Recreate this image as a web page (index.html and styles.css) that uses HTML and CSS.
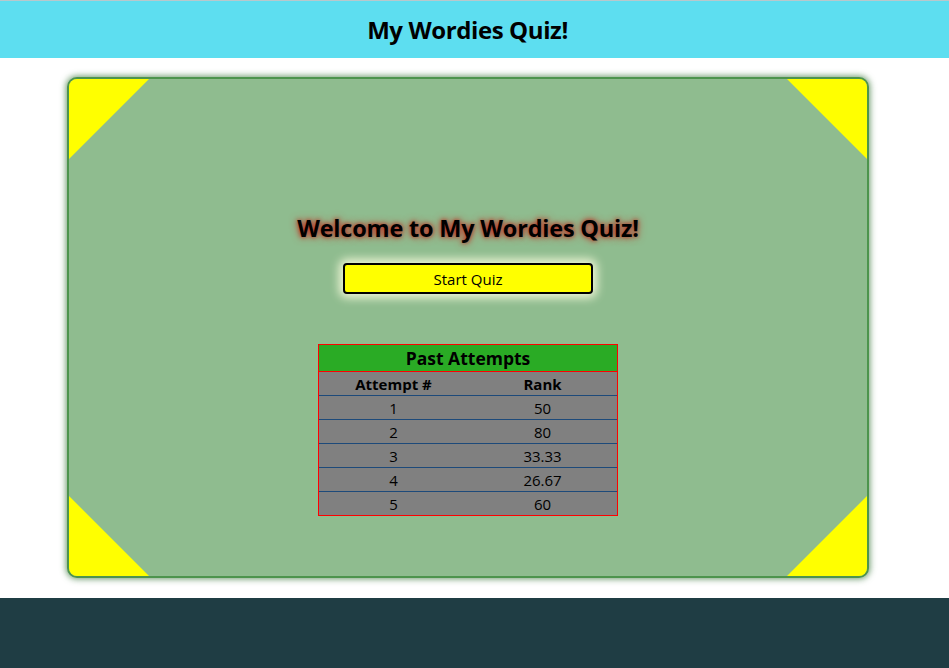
FILE: index.html
```html
<!DOCTYPE html>
<html>
<head>
<meta charset="utf-8">
<link rel="stylesheet" href="styles.css">
</head>
<body>
<header class="topbar"><h1 class="site-title">My Wordies Quiz!</h1></header>
<main class="page">
  <section class="card">
    <span class="corner tl"></span><span class="corner tr"></span>
    <span class="corner bl"></span><span class="corner br"></span>
    <h2 class="welcome">Welcome to My Wordies Quiz!</h2>
    <button class="start-btn">Start Quiz</button>
    <table class="attempts">
      <thead>
        <tr><th colspan="2" class="caption-cell">Past Attempts</th></tr>
        <tr><th>Attempt #</th><th>Rank</th></tr>
      </thead>
      <tbody>
        <tr><td>1</td><td>50</td></tr>
        <tr><td>2</td><td>80</td></tr>
        <tr><td>3</td><td>33.33</td></tr>
        <tr><td>4</td><td>26.67</td></tr>
        <tr><td>5</td><td>60</td></tr>
      </tbody>
    </table>
  </section>
</main>
<footer class="footer"></footer>
</body>
</html>
```

FILE: styles.css
```css
* { box-sizing: border-box; }
html, body { margin: 0; padding: 0; background: #fff; }
body { font-family: "Open Sans", "Noto Sans", sans-serif; color: #000; }

.topbar {
  height: 58px;
  background: #5ddef0;
  border-top: 1px solid #b8c8cc;
  display: flex;
  align-items: center;
  justify-content: center;
  padding-right: 14px;
}
.site-title {
  margin: 0;
  font-size: 24px;
  font-weight: 700;
  letter-spacing: -0.4px;
}

.page {
  padding: 19px 0 20px 67px;
}
.card {
  position: relative;
  width: 802px;
  height: 501px;
  background: #8fbc8f;
  border: 2px solid #4d944d;
  border-radius: 10px;
  box-shadow: 0 0 6px 1px rgba(60, 120, 60, 0.75);
  overflow: hidden;
  display: flex;
  flex-direction: column;
  align-items: center;
  padding-top: 133px;
}
.corner {
  position: absolute;
  width: 80px;
  height: 80px;
  background: #ffff00;
}
.corner.tl { top: 0; left: 0; clip-path: polygon(0 0, 100% 0, 0 100%); }
.corner.tr { top: 0; right: 0; clip-path: polygon(0 0, 100% 0, 100% 100%); }
.corner.bl { bottom: 0; left: 0; clip-path: polygon(0 0, 100% 100%, 0 100%); }
.corner.br { bottom: 0; right: 0; clip-path: polygon(100% 0, 100% 100%, 0 100%); }

.welcome {
  margin: 0;
  font-size: 23.5px;
  font-weight: 700;
  line-height: 32px;
  letter-spacing: -0.2px;
  text-shadow: 0 0 8px #c0392b, 0 0 4px #b03020;
}
.start-btn {
  margin-top: 19px;
  width: 250px;
  height: 31px;
  background: #ffff00;
  border: 2px solid #000;
  border-radius: 4px;
  box-shadow: 0 0 10px 4px rgba(255, 255, 225, 0.85);
  font-family: inherit;
  font-size: 15px;
  color: #000;
  padding: 0;
}

.attempts {
  margin-top: 50px;
  width: 300px;
  border-collapse: separate;
  border-spacing: 0;
  border: 1px solid #ff0000;
  background: #808080;
  font-size: 15px;
}
.attempts th, .attempts td {
  text-align: center;
  padding: 0;
  height: 24px;
  width: 50%;
  border-bottom: 1px solid #1d4a7a;
}
.attempts th { font-weight: 700; }
.attempts tbody tr:last-child td { border-bottom: none; height: 23px; }
.attempts .caption-cell {
  background: #2aab25;
  font-size: 17.5px;
  height: 27px;
  border-bottom: 1px solid #ff0000;
}

.footer {
  height: 70px;
  background: #1f3d44;
}
```
